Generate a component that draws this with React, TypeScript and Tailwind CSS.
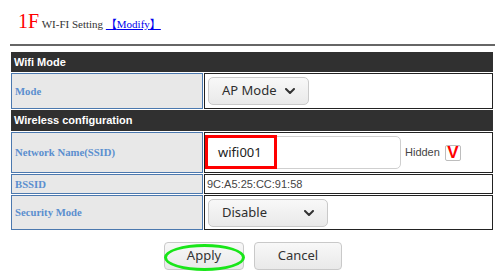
import React from 'react';

const sans = "font-['Liberation_Sans',Arial,sans-serif]";
const serif = "font-['Liberation_Serif','Times_New_Roman',serif]";
const ui = "font-['Noto_Sans',sans-serif]";

function Chevron() {
  return (
    <svg width="10" height="6" viewBox="0 0 10 6" className="shrink-0">
      <polyline points="1,1 5,5 9,1" fill="none" stroke="#333" strokeWidth="2" strokeLinecap="round" strokeLinejoin="round" />
    </svg>
  );
}

function Select({ value, width }: { value: string; width: string }) {
  return (
    <div
      className={`${width} h-[28px] flex items-center justify-between pl-[13px] pr-[13px] rounded-[5px] border border-[#c9c9c9] bg-gradient-to-b from-[#f8f8f8] to-[#e9e9e9] text-[13px] text-[#2e2e2e] ${ui}`}
    >
      <span>{value}</span>
      <Chevron />
    </div>
  );
}

function Header({ title, height }: { title: string; height: string }) {
  return (
    <div className={`${height} bg-[#303030] text-white font-bold text-[11px] pl-[3px] flex items-center ${sans}`}>
      {title}
    </div>
  );
}

function Row({ label, height, children, pad = 'pl-[3px]' }: { label: string; height: string; children: React.ReactNode; pad?: string }) {
  return (
    <div className={`flex gap-[1px] ${height}`}>
      <div className={`w-[192px] shrink-0 border border-[#4b78ae] bg-[#e8e8e8] flex items-center pl-[3px] text-[10.7px] font-bold text-[#5b8fcf] ${serif}`}>
        {label}
      </div>
      <div className={`flex-1 border border-[#222] bg-white flex items-center ${pad}`}>{children}</div>
    </div>
  );
}

export default function App() {
  return (
    <div className="w-[502px] h-[279px] bg-white overflow-hidden">
      <div className={`h-[44px] pl-[18px] pt-[9px] ${serif}`}>
        <span className="text-[20px] leading-[24px] text-[#ff0000]">1F</span>
        <span className="text-[11px] text-[#333]"> WI-FI Setting </span>
        <a className="text-[11px] text-[#0000ee] underline">
          {' '}
          <span className="font-['Liberation_Serif','Noto_Sans_CJK_SC',serif]">【</span>Modify
          <span className="font-['Liberation_Serif','Noto_Sans_CJK_SC',serif]">】</span>{' '}
        </a>
      </div>
      <div className="ml-[10px] w-[485px] h-[2px] bg-[#666]" />

      <div className="ml-[11px] mt-[6px] w-[482px] flex flex-col gap-[1px]">
        <Header title="Wifi Mode" height="h-[20px]" />
        <Row label="Mode" height="h-[36px]">
          <Select value="AP Mode" width="w-[101px]" />
        </Row>
        <Header title="Wireless configuration" height="h-[21px]" />
        <Row label="Network Name(SSID)" height="h-[41px]" pad="pl-[2px]">
          <div className="relative">
            <div className={`w-[194px] h-[33px] rounded-[5px] border border-[#cfcfcf] bg-white flex items-center pl-[10px] text-[13px] text-[#222] ${ui}`}>
              wifi001
            </div>
            {/* red highlight around the SSID value */}
            <div className="absolute left-[-2px] top-[-1px] w-[72px] h-[34px] border-[3px] border-[#ff0000]" />
          </div>
          <span className={`ml-[4px] text-[11px] text-[#444] ${sans}`}>Hidden</span>
          <div className="ml-[5px] w-[16px] h-[16px] border border-[#bdbdbd] rounded-[2px] bg-white flex items-center justify-center">
            <span className={`text-[17px] leading-none font-black text-[#ff0000] ${sans}`}>V</span>
          </div>
        </Row>
        <Row label="BSSID" height="h-[20px]" pad="pl-[2px]">
          <span className={`text-[11px] text-[#444] ${sans}`}>9C:A5:25:CC:91:58</span>
        </Row>
        <Row label="Security Mode" height="h-[35px]">
          <Select value="Disable" width="w-[120px]" />
        </Row>
      </div>

      <div className={`mt-[12px] ml-[164px] flex gap-[10px] text-[13px] text-[#333] ${ui}`}>
        <div className="relative w-[80px] h-[28px] rounded-[4px] border border-[#c9c9c9] bg-gradient-to-b from-[#f8f8f8] to-[#e9e9e9] flex items-center justify-center">
          Apply
          {/* green ellipse mark */}
          <div className="absolute left-[-1px] top-[1px] w-[81px] h-[27px] rounded-[50%] border-[3px] border-[#19e619]" />
        </div>
        <div className="w-[88px] h-[28px] rounded-[4px] border border-[#c9c9c9] bg-gradient-to-b from-[#f8f8f8] to-[#e9e9e9] flex items-center justify-center">
          Cancel
        </div>
      </div>
    </div>
  );
}
